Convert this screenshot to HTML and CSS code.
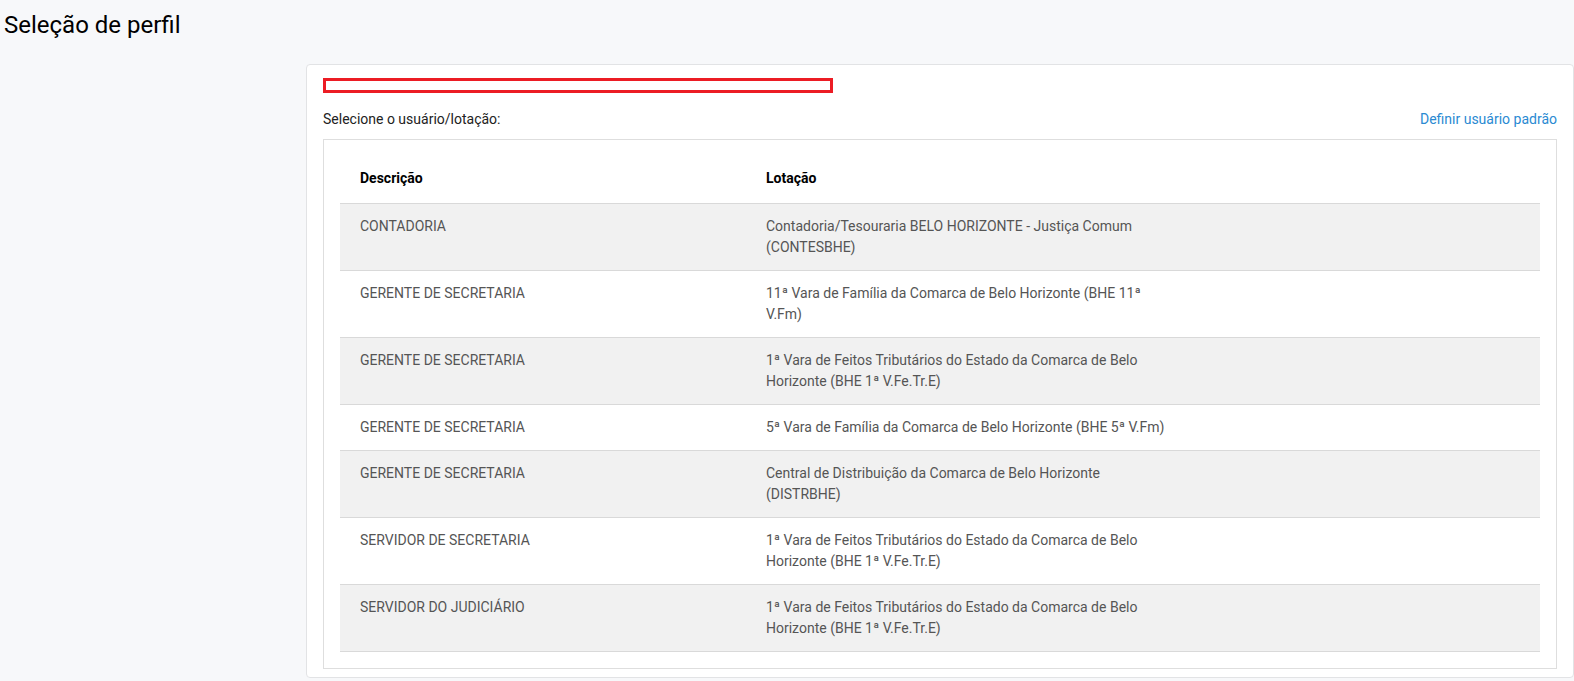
FILE: index.html
```html
<!DOCTYPE html>
<html lang="pt-BR">
<head>
<meta charset="utf-8">
<title>Seleção de perfil</title>
<link rel="stylesheet" href="styles.css">
</head>
<body>
  <h1 class="page-title">Seleção de perfil</h1>
  <div class="layout">
    <div class="spacer"></div>
    <section class="card">
      <div class="redacted"></div>
      <div class="label-row">
        <span class="label">Selecione o usuário/lotação:</span>
        <a class="link" href="#">Definir usuário padrão</a>
      </div>
      <div class="table-box">
        <div class="table">
          <div class="row head">
            <div class="cell">Descrição</div>
            <div class="cell">Lotação</div>
            <div class="cell"></div>
          </div>
          <div class="row odd">
            <div class="cell">CONTADORIA</div>
            <div class="cell">Contadoria/Tesouraria BELO HORIZONTE - Justiça Comum (CONTESBHE)</div>
            <div class="cell"></div>
          </div>
          <div class="row">
            <div class="cell">GERENTE DE SECRETARIA</div>
            <div class="cell">11ª Vara de Família da Comarca de Belo Horizonte (BHE 11ª V.Fm)</div>
            <div class="cell"></div>
          </div>
          <div class="row odd">
            <div class="cell">GERENTE DE SECRETARIA</div>
            <div class="cell">1ª Vara de Feitos Tributários do Estado da Comarca de Belo Horizonte (BHE 1ª V.Fe.Tr.E)</div>
            <div class="cell"></div>
          </div>
          <div class="row">
            <div class="cell">GERENTE DE SECRETARIA</div>
            <div class="cell">5ª Vara de Família da Comarca de Belo Horizonte (BHE 5ª V.Fm)</div>
            <div class="cell"></div>
          </div>
          <div class="row odd">
            <div class="cell">GERENTE DE SECRETARIA</div>
            <div class="cell">Central de Distribuição da Comarca de Belo Horizonte (DISTRBHE)</div>
            <div class="cell"></div>
          </div>
          <div class="row">
            <div class="cell">SERVIDOR DE SECRETARIA</div>
            <div class="cell">1ª Vara de Feitos Tributários do Estado da Comarca de Belo Horizonte (BHE 1ª V.Fe.Tr.E)</div>
            <div class="cell"></div>
          </div>
          <div class="row odd">
            <div class="cell">SERVIDOR DO JUDICIÁRIO</div>
            <div class="cell">1ª Vara de Feitos Tributários do Estado da Comarca de Belo Horizonte (BHE 1ª V.Fe.Tr.E)</div>
            <div class="cell"></div>
          </div>
        </div>
      </div>
    </section>
  </div>
</body>
</html>
```
FILE: styles.css
```css
* { box-sizing: border-box; }

html, body {
  margin: 0;
  padding: 0;
}

body {
  background: #f7f8fa;
  font-family: Roboto, "Liberation Sans", Arial, sans-serif;
  font-size: 14px;
  color: #333;
  overflow: hidden;
}

.page-title {
  margin: 0;
  padding: 11px 4px 0;
  font-size: 24px;
  line-height: 28px;
  font-weight: 400;
  color: #000;
}

.layout {
  display: grid;
  grid-template-columns: 306px 1fr;
  margin-top: 25px;
}

.card {
  background: #fff;
  border: 1px solid #e2e3e5;
  border-radius: 4px;
  padding: 13px 16px 8px;
}

.redacted {
  width: 510px;
  height: 15px;
  border: 3px solid #ec1c24;
  background: #fff;
}

.label-row {
  display: flex;
  justify-content: space-between;
  align-items: center;
  margin-top: 16px;
  margin-bottom: 9px;
  line-height: 21px;
}

.label {
  color: #222;
}

.link {
  color: #2a8ad2;
  text-decoration: none;
}

.table-box {
  border: 1px solid #dedede;
  padding: 16px;
}

.row {
  display: grid;
  grid-template-columns: 406px 445px 1fr;
  border-bottom: 1px solid #d9d9d9;
  background: #fff;
}

.row.odd {
  background: #f1f1f1;
}

.cell {
  padding: 12px 20px;
  line-height: 21px;
  color: #555;
}

.row.head .cell {
  padding-bottom: 14px;
  color: #000;
  font-weight: 700;
}
```
